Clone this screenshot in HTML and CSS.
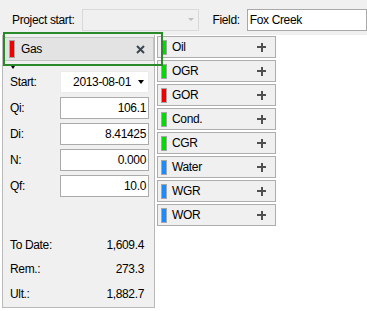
FILE: index.html
```html
<!DOCTYPE html>
<html lang="en">
<head>
    <meta charset="UTF-8">
    <title>Forecast</title>
    <link rel="stylesheet" href="styles.css">
</head>
<body>
    <div class="topbar">
        <span class="lbl project-lbl">Project start:</span>
        <div class="combo"><span class="combo-arrow"></span></div>
        <span class="lbl field-lbl">Field:</span>
        <div class="field-input">Fox Creek</div>
    </div>

    <div class="main">
        <div class="panel">
            <div class="tab">
                <span class="marker red tab-marker"></span>
                <span class="tab-name">Gas</span>
                <svg class="close" width="9" height="9" viewBox="0 0 9 9">
                    <path d="M1 1L8 8M8 1L1 8" stroke="#3b4650" stroke-width="2"/>
                </svg>
            </div>
            <div class="caret"></div>

            <div class="form">
                <div class="row">
                    <span class="row-lbl">Start:</span>
                    <div class="date">2013-08-01 <span class="date-arrow"></span></div>
                </div>
                <div class="row">
                    <span class="row-lbl">Qi:</span>
                    <div class="num">106.1</div>
                </div>
                <div class="row">
                    <span class="row-lbl">Di:</span>
                    <div class="num">8.41425</div>
                </div>
                <div class="row">
                    <span class="row-lbl">N:</span>
                    <div class="num">0.000</div>
                </div>
                <div class="row">
                    <span class="row-lbl">Qf:</span>
                    <div class="num">10.0</div>
                </div>
            </div>

            <div class="totals">
                <div class="total"><span>To Date:</span><span>1,609.4</span></div>
                <div class="total"><span>Rem.:</span><span>273.3</span></div>
                <div class="total"><span>Ult.:</span><span>1,882.7</span></div>
            </div>
        </div>

        <div class="streams">
            <div class="stream"><span class="marker green"></span><span class="stream-name">Oil</span><span class="plus"></span></div>
            <div class="stream"><span class="marker green"></span><span class="stream-name">OGR</span><span class="plus"></span></div>
            <div class="stream"><span class="marker red"></span><span class="stream-name">GOR</span><span class="plus"></span></div>
            <div class="stream"><span class="marker green"></span><span class="stream-name">Cond.</span><span class="plus"></span></div>
            <div class="stream"><span class="marker green"></span><span class="stream-name">CGR</span><span class="plus"></span></div>
            <div class="stream"><span class="marker blue"></span><span class="stream-name">Water</span><span class="plus"></span></div>
            <div class="stream"><span class="marker blue"></span><span class="stream-name">WGR</span><span class="plus"></span></div>
            <div class="stream"><span class="marker blue"></span><span class="stream-name">WOR</span><span class="plus"></span></div>
        </div>

        <!-- focus rectangle drawn over the selected tab -->
        <div class="focus"></div>
    </div>
</body>
</html>
```

FILE: styles.css
```css
* {
    margin: 0;
    padding: 0;
    box-sizing: border-box;
}
body {
    background-color: #fff;
    font-family: "Liberation Sans", Arial, sans-serif;
    font-size: 12px;
    letter-spacing: -0.35px;
    color: #000;
}

/* top bar */
.topbar {
    height: 35px;
    background-color: #f0f0f0;
    display: flex;
    align-items: flex-start;
    padding-top: 9px;
}
.lbl {
    line-height: 22px;
}
.project-lbl {
    margin-left: 12px;
}
.combo {
    width: 117px;
    height: 22px;
    margin-left: 8px;
    border: 1px solid #d9d9d9;
    background-color: #f0f0f0;
    position: relative;
}
.combo-arrow {
    position: absolute;
    right: 4px;
    top: 8px;
    border-left: 3px solid transparent;
    border-right: 3px solid transparent;
    border-top: 3px solid #bfbfbf;
}
.field-lbl {
    margin-left: 13px;
}
.field-input {
    width: 120px;
    height: 22px;
    margin-left: 7px;
    border: 1px solid #a8a8a8;
    background-color: #fff;
    line-height: 20px;
    padding-left: 2px;
}

/* main area */
.main {
    display: flex;
    position: relative;
    height: 276px;
}
.panel {
    width: 153px;
    height: 273px;
    margin-left: 2px;
    background-color: #f0f0f0;
    border: 1px solid #b9b9b9;
    border-top: none;
    display: flex;
    flex-direction: column;
}
.tab {
    height: 24px;
    margin: 2px 0 0 1px;
    background-color: #e3e3e3;
    border: 1px solid #c4c4c4;
    display: flex;
    align-items: center;
    padding: 0 8px 0 4px;
}
.tab-name {
    flex: 1;
    margin-left: 6px;
}
.marker {
    width: 6px;
    height: 15px;
    border: 1px solid #a6a6a6;
}
.tab-marker {
    height: 18px;
}
.red {
    background-color: #f00000;
}
.green {
    background-color: #00dc00;
}
.blue {
    background-color: #1a8cff;
}
.caret {
    width: 0;
    height: 0;
    margin: 5px 0 0 8px;
    border-left: 2px solid transparent;
    border-right: 2px solid transparent;
    border-top: 3px solid #000;
}

/* inputs */
.form {
    margin-top: 2px;
    padding: 0 5px 0 7px;
    display: flex;
    flex-direction: column;
    gap: 4px;
}
.row {
    display: flex;
    align-items: center;
    height: 22px;
}
.row-lbl {
    width: 50px;
}
.date, .num {
    width: 89px;
    height: 22px;
    background-color: #fff;
    line-height: 20px;
    text-align: right;
}
.date {
    border: 1px solid #ececec;
    padding-right: 4px;
    display: flex;
    justify-content: flex-end;
    align-items: center;
    gap: 7px;
}
.date-arrow {
    border-left: 3.5px solid transparent;
    border-right: 3.5px solid transparent;
    border-top: 4px solid #000;
}
.num {
    border: 1px solid #ababab;
    padding-right: 2px;
}

/* totals */
.totals {
    margin-top: auto;
    padding: 0 10px 1px 7px;
}
.total {
    height: 24.5px;
    display: flex;
    align-items: center;
    justify-content: space-between;
}

/* stream buttons */
.streams {
    width: 119px;
    margin: 1px 0 0 2px;
    display: flex;
    flex-direction: column;
    gap: 2px;
}
.stream {
    height: 22px;
    border: 1px solid #adadad;
    background-color: #f0f0f0;
    display: flex;
    align-items: center;
    padding: 0 9px 0 3px;
}
.stream-name {
    flex: 1;
    margin-left: 5px;
}
.plus {
    width: 9px;
    height: 9px;
    background:
        linear-gradient(#505050, #505050) center / 9px 2px no-repeat,
        linear-gradient(#505050, #505050) center / 2px 9px no-repeat;
}

.focus {
    position: absolute;
    left: 3px;
    top: -3px;
    width: 160px;
    height: 34px;
    border: 2px solid #2a8a2a;
}
```
